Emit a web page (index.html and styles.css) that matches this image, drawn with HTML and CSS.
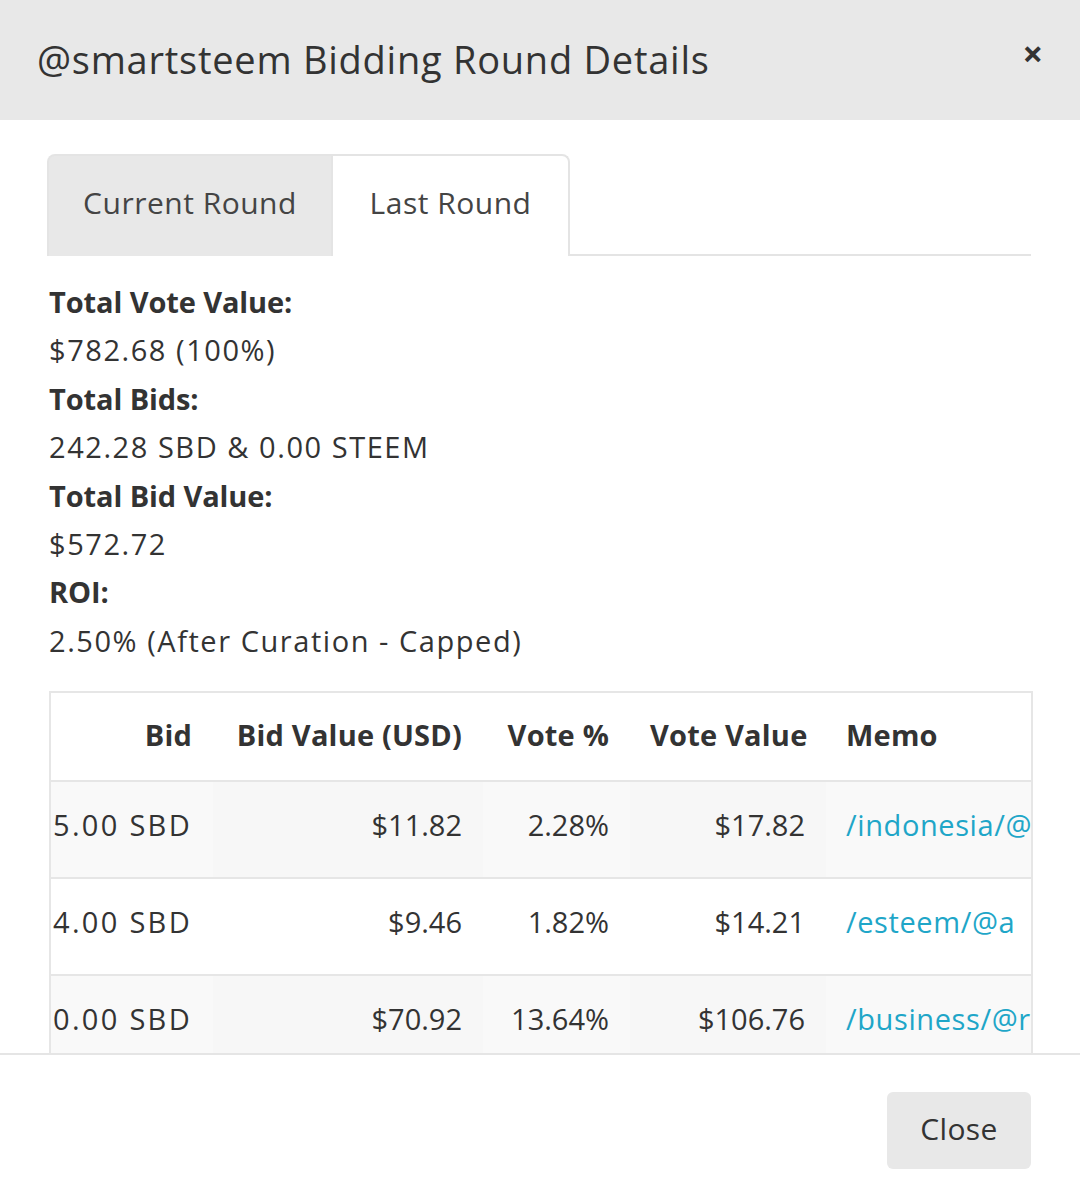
FILE: index.html
```html
<!DOCTYPE html>
<html>
<head>
<meta charset="utf-8">
<link rel="stylesheet" href="styles.css">
</head>
<body>
<div class="modal">
  <div class="modal-header">
    <h1 class="title">@smartsteem Bidding Round Details</h1>
    <span class="close-x">&times;</span>
  </div>
  <div class="modal-body">
    <div class="tabs">
      <div class="tab">Current Round</div>
      <div class="tab active">Last Round</div>
    </div>
    <div class="details">
      <div class="label">Total Vote Value:</div>
      <div class="value">$782.68 (100%)</div>
      <div class="label">Total Bids:</div>
      <div class="value">242.28 SBD &amp; 0.00 STEEM</div>
      <div class="label">Total Bid Value:</div>
      <div class="value">$572.72</div>
      <div class="label">ROI:</div>
      <div class="value">2.50% (After Curation - Capped)</div>
    </div>
    <table class="bids">
      <colgroup>
        <col class="c1"><col class="c2"><col class="c3"><col class="c4"><col class="c5">
      </colgroup>
      <thead>
        <tr>
          <th class="num">Bid</th>
          <th class="num">Bid Value (USD)</th>
          <th class="num">Vote %</th>
          <th class="num">Vote Value</th>
          <th>Memo</th>
        </tr>
      </thead>
      <tbody>
        <tr>
          <td class="num bid">5.00 SBD</td>
          <td class="num">$11.82</td>
          <td class="num">2.28%</td>
          <td class="num">$17.82</td>
          <td class="memo"><a>/indonesia/@</a></td>
        </tr>
        <tr>
          <td class="num bid">4.00 SBD</td>
          <td class="num">$9.46</td>
          <td class="num">1.82%</td>
          <td class="num">$14.21</td>
          <td class="memo"><a>/esteem/@a</a></td>
        </tr>
        <tr>
          <td class="num bid">0.00 SBD</td>
          <td class="num">$70.92</td>
          <td class="num">13.64%</td>
          <td class="num">$106.76</td>
          <td class="memo"><a>/business/@r</a></td>
        </tr>
      </tbody>
    </table>
  </div>
  <div class="modal-footer">
    <button class="btn">Close</button>
  </div>
</div>
</body>
</html>
```

FILE: styles.css
```css
* { box-sizing: border-box; }
html, body { margin: 0; padding: 0; }
body {
  width: 1080px;
  height: 1202px;
  overflow: hidden;
  background: #fff;
  font-family: "Open Sans", "Noto Sans", sans-serif;
  color: #333;
}
.modal {
  display: flex;
  flex-direction: column;
  height: 1202px;
}
.modal-header {
  height: 120px;
  flex: none;
  background: #e8e8e8;
  display: flex;
  align-items: center;
  justify-content: space-between;
  padding: 0 37px 0 37px;
}
.title {
  margin: 0;
  font-weight: 400;
  font-size: 38px;
  letter-spacing: 0.75px;
  color: #333;
  padding-bottom: 2px;
}
.close-x {
  font-size: 36px;
  font-weight: 700;
  color: #333;
  line-height: 1;
  padding-bottom: 12px;
}
.modal-body {
  flex: 1;
  overflow: hidden;
  padding: 34px 49px 0 47px;
}
.tabs {
  display: flex;
  border-bottom: 2px solid #e4e4e4;
  height: 102px;
}
.tab {
  height: 102px;
  display: flex;
  align-items: center;
  justify-content: center;
  white-space: nowrap;
  font-size: 30px;
  letter-spacing: 0.5px;
  color: #444;
  background: #e8e8e8;
  border: 2px solid #e4e4e4;
  border-bottom: none;
  border-radius: 8px 0 0 0;
  padding-bottom: 8px;
  width: 286px;
}
.tab.active {
  background: #fff;
  border-left: none;
  border-radius: 0 8px 0 0;
  width: 237px;
  margin-bottom: -2px;
}
.details {
  margin-top: 22px;
  padding-left: 2px;
  font-size: 29px;
  line-height: 48.4px;
}
.label { font-weight: 700; letter-spacing: -0.1px; }
.value { letter-spacing: 1.55px; }
.bids {
  margin-top: 26px;
  margin-left: 2px;
  width: 982px;
  table-layout: fixed;
  border-collapse: collapse;
  border: 2px solid #e6e6e6;
  font-size: 29px;
}
.c1 { width: 163px; }
.c2 { width: 270px; }
.c3 { width: 147px; }
.c4 { width: 196px; }
.c5 { width: 206px; }
.bids th, .bids td {
  white-space: nowrap;
  overflow: hidden;
  padding: 0 21px 0 20px;
  text-align: left;
}
.bids th {
  height: 89px;
  font-weight: 700;
  letter-spacing: 0.2px;
  padding-bottom: 5px;
}
.bids td {
  height: 97px;
  border-top: 2px solid #e6e6e6;
  padding-bottom: 10px;
}
.bids td.bid {
  padding-left: 0;
  letter-spacing: 2.3px;
}
.bids td.memo { padding-right: 0; letter-spacing: 0.6px; }
.bids .num { text-align: right; }
.bids tbody tr:nth-child(odd) td { background: #f9f9f9; }
.bids tbody tr:nth-child(odd) td:nth-child(2),
.bids tbody tr:nth-child(odd) td:nth-child(4) { background: #f7f7f7; }
.bids a { color: #1fa6c8; text-decoration: none; }
.modal-footer {
  flex: none;
  height: 149px;
  border-top: 2px solid #e5e5e5;
  display: flex;
  justify-content: flex-end;
  align-items: flex-start;
  padding: 37px 49px 0 0;
}
.btn {
  width: 144px;
  height: 77px;
  border: none;
  border-radius: 6px;
  background: #e8e8e8;
  font-family: "Open Sans", "Noto Sans", sans-serif;
  font-size: 30px;
  letter-spacing: 0.4px;
  color: #333;
  padding: 0 0 4px 0;
}
```
